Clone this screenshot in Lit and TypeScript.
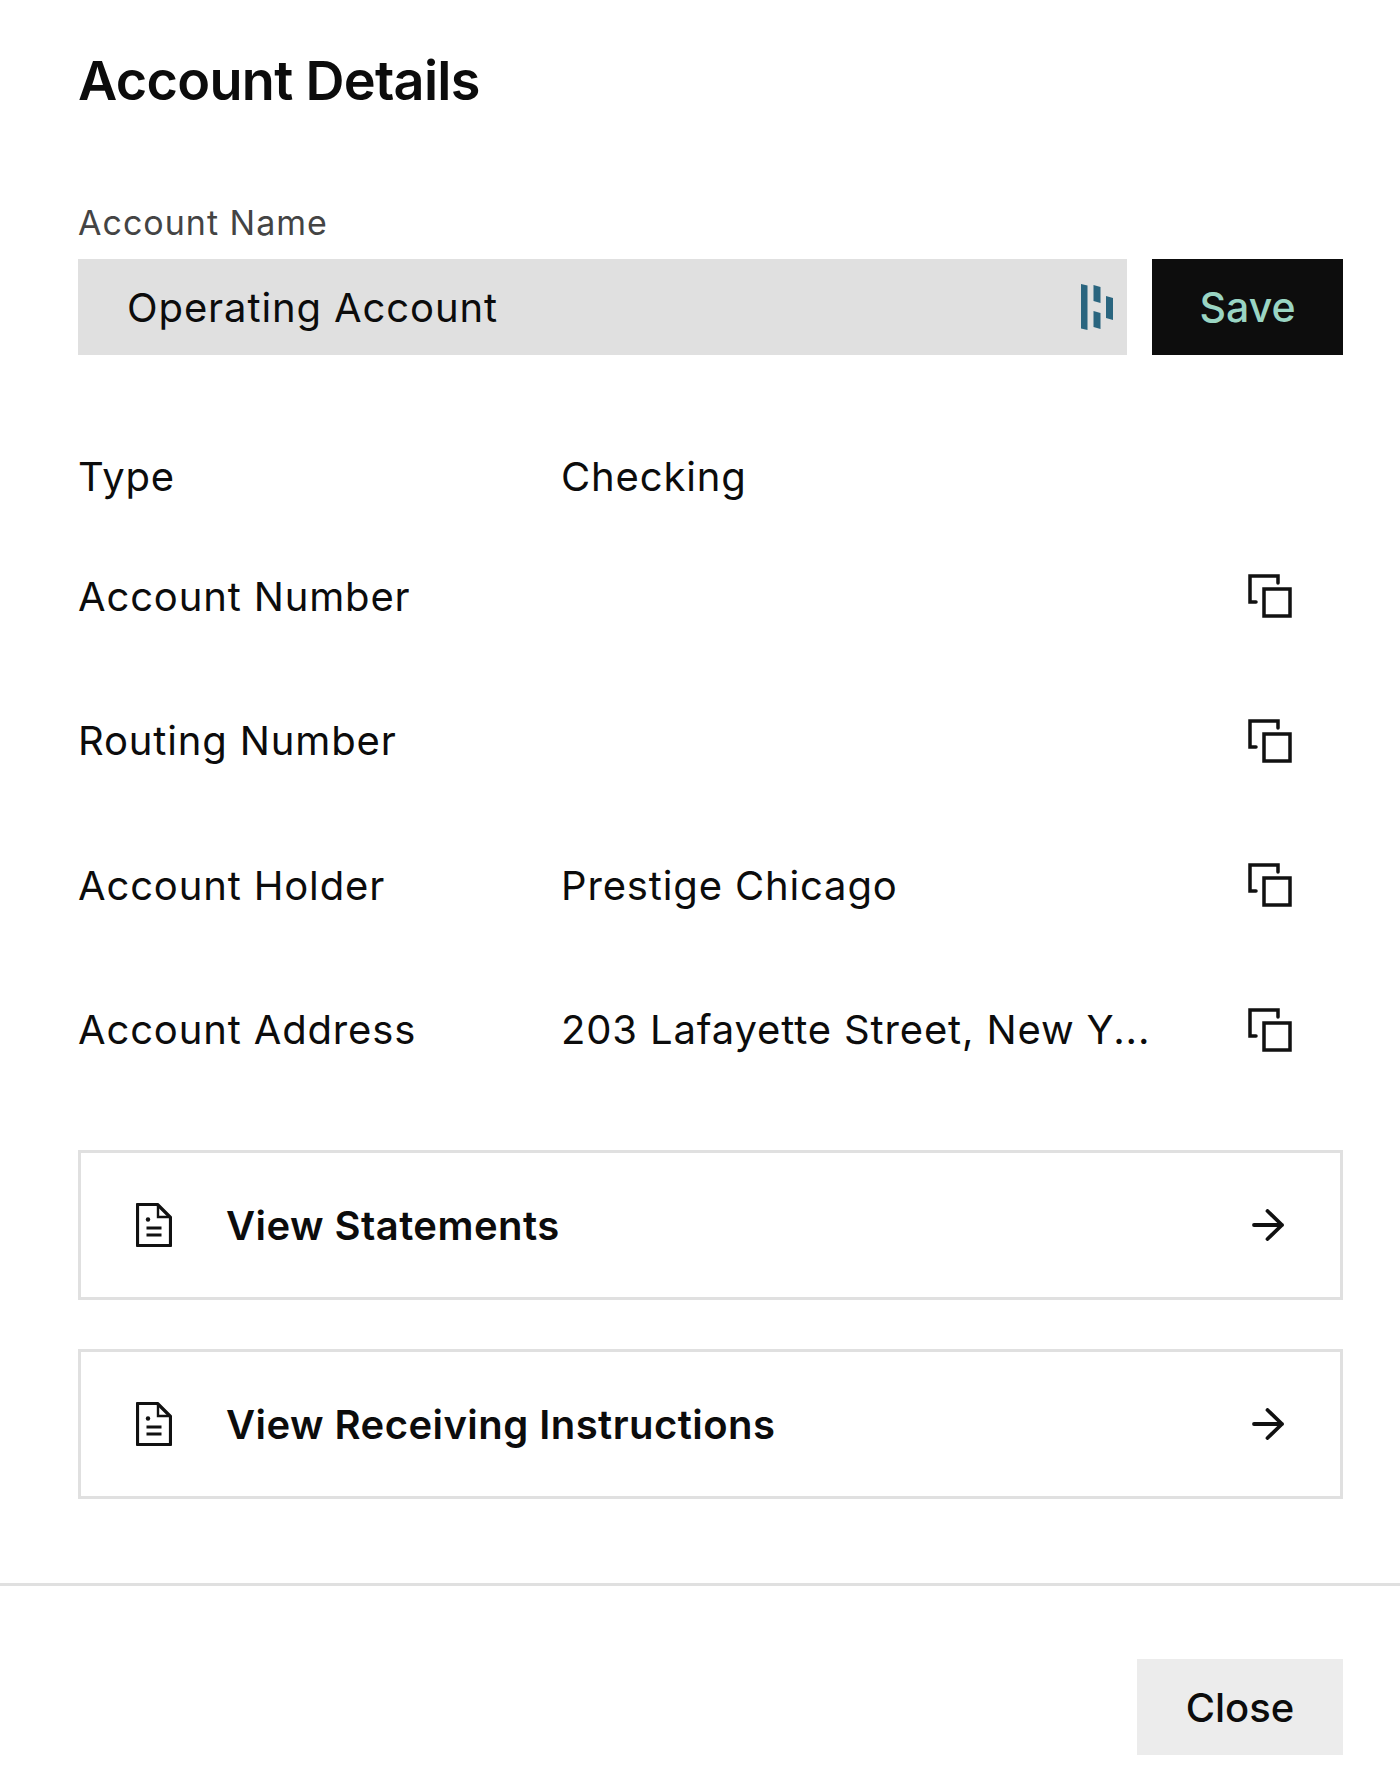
import { LitElement, html, css, svg } from "lit";
import { customElement } from "lit/decorators.js";

const copyIcon = svg`<svg class="copy" viewBox="0 0 44 44" fill="none" stroke="#111" stroke-width="3.500">
  <path d="M8 28H2V2h28v7" stroke-linecap="round" stroke-linejoin="miter"/>
  <rect x="16" y="15" width="26" height="27"/>
</svg>`;
const docIcon = svg`<svg class="doc" viewBox="0 0 36 44" fill="none" stroke="#111" stroke-width="3.200">
  <path d="M1.500 1.500h20l13 13v28h-33z" stroke-linejoin="round"/>
  <path d="M22 2v12h12" stroke-width="2.400"/>
  <circle cx="12" cy="16.500" r="2.200" fill="#111" stroke="none"/>
  <path d="M10.500 25h15M10.500 32h15" stroke-width="3"/>
</svg>`;
const arrowIcon = svg`<svg class="arrow" viewBox="0 0 32 32" fill="none" stroke="#111" stroke-width="3.800" stroke-linecap="round" stroke-linejoin="round">
  <path d="M2 16h28M15.500 2 30 16 15.500 30"/>
</svg>`;
const logo = svg`<svg class="logo" viewBox="0 0 32 46" fill="#2a657f">
  <path d="M0 0 6.500 1.500V46L0 44.500z"/>
  <path d="M12.500 1 19.500 3V19L12.500 17z"/>
  <path d="M12.500 27 19.500 29V45L12.500 43z"/>
  <path d="M25 12 32 14V36L25 34z"/>
</svg>`;

@customElement("app-root")
export class AppRoot extends LitElement {
  static styles = css`
    :host {
      display: block;
      width: 1400px;
      height: 1785px;
      background: #fff;
      color: #0c0c0c;
      font-family: Inter, "Liberation Sans", sans-serif;
      box-sizing: border-box;
      overflow: hidden;
    }
    .body {
      padding: 50px 57px 0 78px;
      display: flex;
      flex-direction: column;
    }
    h1 {
      margin: 0;
      font-size: 54px;
      line-height: 62px;
      font-weight: 600;
      letter-spacing: -0.7px;
    }
    .label {
      margin-top: 91px;
      font-size: 34px;
      line-height: 40px;
      color: #444;
      letter-spacing: 1px;
    }
    .name-row {
      margin-top: 16px;
      display: flex;
      gap: 25px;
    }
    .input {
      flex: 1;
      height: 96px;
      background: #e0e0e0;
      display: flex;
      align-items: center;
      justify-content: space-between;
      padding: 0 14px 0 49px;
      font-size: 40px;
      letter-spacing: 0.9px;
    }
    .logo {
      width: 32px;
      height: 46px;
    }
    .save {
      width: 191px;
      height: 96px;
      background: #0d0d0d;
      color: #9ad5c3;
      display: flex;
      align-items: center;
      justify-content: center;
      font-size: 41px;
      font-weight: 500;
    }
    .rows {
      margin-top: 85px;
      display: flex;
      flex-direction: column;
    }
    .row {
      display: grid;
      grid-template-columns: 483px 1fr 44px;
      align-items: center;
      height: 120px;
      margin-bottom: 24.500px;
      padding-right: 51px;
      font-size: 40px;
      letter-spacing: 0.85px;
    }
    .row.first {
      height: 72px;
      margin-bottom: 24px;
    }
    .copy {
      width: 44px;
      height: 44px;
    }
    .actions {
      margin-top: 36px;
      display: flex;
      flex-direction: column;
      gap: 49px;
    }
    .card {
      box-sizing: border-box;
      height: 150px;
      border: 3px solid #e0e0e0;
      display: flex;
      align-items: center;
      padding: 0 56px 0 55px;
      font-size: 40px;
      font-weight: 600;
      letter-spacing: 0.45px;
    }
    .doc {
      width: 36px;
      height: 44px;
      margin-right: 54px;
    }
    .card span {
      flex: 1;
    }
    .arrow {
      width: 32px;
      height: 32px;
    }
    .foot {
      margin-top: 84px;
      border-top: 3px solid #e0e0e0;
      padding: 73px 57px 0 0;
      display: flex;
      justify-content: flex-end;
    }
    .close {
      width: 206px;
      height: 96px;
      background: #ececec;
      display: flex;
      align-items: center;
      justify-content: center;
      font-size: 40px;
      font-weight: 500;
    }
  `;

  private row(label: string, value: string, copy = true, first = false) {
    return html`<div class="row ${first ? "first" : ""}">
      <div>${label}</div>
      <div>${value}</div>
      ${copy ? copyIcon : html`<div></div>`}
    </div>`;
  }

  render() {
    return html`
      <div class="body">
        <h1>Account Details</h1>
        <div class="label">Account Name</div>
        <div class="name-row">
          <div class="input"><span>Operating Account</span>${logo}</div>
          <div class="save">Save</div>
        </div>
        <div class="rows">
          ${this.row("Type", "Checking", false, true)}
          ${this.row("Account Number", "")}
          ${this.row("Routing Number", "")}
          ${this.row("Account Holder", "Prestige Chicago")}
          ${this.row("Account Address", "203 Lafayette Street, New Y...")}
        </div>
        <div class="actions">
          <div class="card">${docIcon}<span>View Statements</span>${arrowIcon}</div>
          <div class="card">${docIcon}<span>View Receiving Instructions</span>${arrowIcon}</div>
        </div>
      </div>
      <div class="foot"><div class="close">Close</div></div>
    `;
  }
}
